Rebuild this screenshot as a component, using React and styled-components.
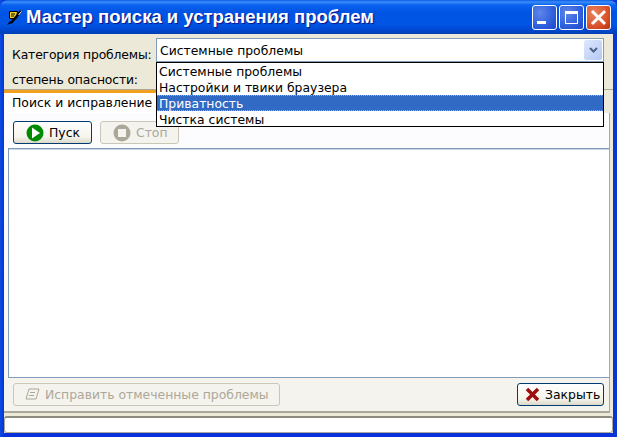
import React from "react";
import styled, { createGlobalStyle } from "styled-components";

const Global = createGlobalStyle`
  html, body { margin: 0; padding: 0; background: #0831d9; }
  * { box-sizing: border-box; }
`;

const Win = styled.div`
  width: 617px;
  height: 437px;
  display: flex;
  flex-direction: column;
  font-family: "DejaVu Sans", Verdana, sans-serif;
  font-size: 12.4px;
  color: #000;
  overflow: hidden;
  background: linear-gradient(90deg, #0a4de0 0, #0831d9 4px, #0831d9 613px, #0a3ad0 100%);
`;

const TitleBar = styled.div`
  height: 34px;
  flex: none;
  display: flex;
  align-items: center;
  padding: 0 6px 0 6px;
  border-radius: 8px 8px 0 0;
  background: linear-gradient(180deg, #0a5de8 0, #3b8cf6 2px, #0a62f0 5px, #0054e3 12px, #0055e5 24px, #0048d0 30px, #0040b8 33px);
`;

const AppIcon = styled.svg`
  width: 16px;
  height: 18px;
  flex: none;
  margin-right: 4px;
`;

const Title = styled.div`
  flex: 1;
  color: #fff;
  font-family: "Liberation Sans", Arial, sans-serif;
  font-size: 18.5px;
  font-weight: bold;
  text-shadow: 1px 1px 1px #0f1089;
  white-space: nowrap;
`;

const CapButton = styled.div`
  width: 25px;
  height: 25px;
  margin-left: 2px;
  border: 1px solid #fff;
  border-radius: 3px;
  display: flex;
  align-items: center;
  justify-content: center;
  background: ${p =>
    p.$close
      ? "radial-gradient(circle at 30% 30%, #e8835f, #d9532c 60%, #b8300e)"
      : "radial-gradient(circle at 30% 30%, #5f85e8, #2f5fdc 60%, #1f45c8)"};
`;

const Body = styled.div`
  flex: 1;
  margin: 0 4px 4px;
  display: flex;
  flex-direction: column;
  background: #ece9d8;
  min-height: 0;
`;

const Filter = styled.div`
  position: relative;
  height: 56px;
  flex: none;
  display: grid;
  grid-template-columns: 152px 448px;
  grid-template-rows: 28px 27px;
  padding-top: 4px;
  border-bottom: 1px solid #aca899;
`;

const FilterLabel = styled.div`
  padding: ${p => p.$top}px 0 0 8px;
  line-height: 15px;
  letter-spacing: -0.16px;
  white-space: nowrap;
`;

const Combo = styled.div`
  height: 24px;
  border: 1px solid #7f9db9;
  background: #fff;
  display: flex;
  align-items: center;
  justify-content: space-between;
  padding: 0 1px 0 3px;
`;

const ComboArrow = styled.div`
  width: 18px;
  height: 20px;
  border-radius: 2px;
  background: linear-gradient(135deg, #dfe8fb, #b3c8f5);
  display: flex;
  align-items: center;
  justify-content: center;
`;

const DropDown = styled.div`
  position: absolute;
  left: 152px;
  top: 28px;
  width: 448px;
  height: 65px;
  z-index: 2;
  background: #fff;
  border: 1px solid #000;
`;

const dots = "repeating-linear-gradient(90deg, #e8a840 0 1px, transparent 1px 2px)";

const DropItem = styled.div`
  height: 16px;
  line-height: 17px;
  padding-left: 2px;
  white-space: nowrap;
  color: ${p => (p.$active ? "#fff" : "#000")};
  background: ${p =>
    p.$active
      ? `${dots} top / 100% 1px no-repeat, ${dots} bottom / 100% 1px no-repeat, #316ac5`
      : "transparent"};
`;

const TabStrip = styled.div`
  height: 23px;
  flex: none;
  display: flex;
`;

const Tab = styled.div`
  width: 152px;
  border-top: 3px solid #f2a01e;
  background: #fff;
  line-height: 16px;
  padding: 2px 0 0 8px;
  white-space: nowrap;
`;

const Page = styled.div`
  flex: 1;
  margin-right: 3px;
  display: flex;
  flex-direction: column;
  min-height: 0;
  background: linear-gradient(180deg, #fff 0, #f6f5f0 100%);
  border-right: 1px solid #aca899;
  border-bottom: 2px solid #aca899;
`;

const Toolbar = styled.div`
  height: 35px;
  flex: none;
  display: flex;
  gap: 8px;
  align-items: flex-start;
  padding: 8px 0 0 9px;
  background: #fcfcfe;
`;

const Btn = styled.div`
  width: ${p => p.$w}px;
  height: 23px;
  display: flex;
  align-items: center;
  gap: 5px;
  padding-left: ${p => p.$pad || 12}px;
  border-radius: 3px;
  white-space: nowrap;
  color: ${p => (p.$off ? "#aca899" : "#000")};
  border: 1px solid ${p => (p.$off ? "#cbc7b8" : "#003c74")};
  background: ${p =>
    p.$off ? "#f4f3ee" : "linear-gradient(180deg, #fff 0, #f5f4ec 70%, #dcd8ca 100%)"};
`;

const List = styled.div`
  flex: 1;
  margin-left: 4px;
  background: #fff;
  border-top: 1px solid #7f9db9;
  border-left: 1px solid #7f9db9;
  border-bottom: 1px solid #7f9db9;
  box-shadow: inset 0 1px 0 #c9d6e6;
`;

const Footer = styled.div`
  height: 33px;
  flex: none;
  display: flex;
  justify-content: space-between;
  align-items: flex-start;
  padding: 5px 5px 0 9px;
  background: #f4f3ee;
`;

const StatusBar = styled.div`
  height: 17px;
  flex: none;
  margin-top: 3px;
  background: #fff;
  border: 1px solid #aca899;
  border-top: 2px solid #8d8a7e;
  border-radius: 3px;
`;

const App = () => (
  <Win>
    <Global />
    <TitleBar>
      <AppIcon viewBox="0 0 16 18">
        <path d="M3.500 3.500h8l-1 7h-7z" fill="#f2d21e" stroke="#000" />
        <path d="M5 6h4M5 8h3" stroke="#000" />
        <path d="M15 3L5 15" stroke="#000" strokeWidth="2.500" />
        <path d="M15.500 3.500l-3 3.500" stroke="#fff" />
        <path d="M1 17l3-4 2 2z" fill="#000" />
      </AppIcon>
      <Title>Мастер поиска и устранения проблем</Title>
      <CapButton>
        <svg width="23" height="23" viewBox="0 0 23 23">
          <rect x="4" y="15" width="9" height="3" fill="#fff" />
        </svg>
      </CapButton>
      <CapButton>
        <svg width="23" height="23" viewBox="0 0 23 23">
          <rect x="5.500" y="5.500" width="12" height="12" fill="none" stroke="#fff" />
          <rect x="5" y="5" width="13" height="3" fill="#fff" />
        </svg>
      </CapButton>
      <CapButton $close>
        <svg width="23" height="23" viewBox="0 0 23 23">
          <path d="M5 5l13 13M18 5L5 18" stroke="#fff" strokeWidth="3" />
        </svg>
      </CapButton>
    </TitleBar>
    <Body>
      <Filter>
        <FilterLabel $top={9}>Категория проблемы:</FilterLabel>
        <Combo>
          Системные проблемы
          <ComboArrow>
            <svg width="9" height="7" viewBox="0 0 9 7">
              <path d="M1 1l3.500 3.500L8 1" fill="none" stroke="#4d6185" strokeWidth="2" />
            </svg>
          </ComboArrow>
        </Combo>
        <FilterLabel $top={6}>степень опасности:</FilterLabel>
        <DropDown>
          <DropItem>Системные проблемы</DropItem>
          <DropItem>Настройки и твики браузера</DropItem>
          <DropItem $active>Приватность</DropItem>
          <DropItem>Чистка системы</DropItem>
        </DropDown>
      </Filter>
      <TabStrip>
        <Tab>Поиск и исправление</Tab>
      </TabStrip>
      <Page>
        <Toolbar>
          <Btn $w={79}>
            <svg width="18" height="18" viewBox="0 0 18 18">
              <circle cx="9" cy="9" r="8.500" fill="#008a00" />
              <path d="M6 3.500L14 9l-8 5.500z" fill="#fff" />
            </svg>
            Пуск
          </Btn>
          <Btn $w={79} $off>
            <svg width="18" height="18" viewBox="0 0 18 18">
              <circle cx="9" cy="9" r="8.500" fill="#aca899" />
              <rect x="5" y="5" width="8" height="8" fill="#f4f3ee" />
            </svg>
            Стоп
          </Btn>
        </Toolbar>
        <List />
        <Footer>
          <Btn $w={267} $pad={11} $off>
            <svg width="15" height="14" viewBox="0 0 15 14">
              <path d="M4 1h10l-3 10H1z" fill="none" stroke="#aca899" />
              <path d="M5 4.500h5M4 7.500h5" stroke="#aca899" />
            </svg>
            Исправить отмеченные проблемы
          </Btn>
          <Btn $w={87} $pad={7}>
            <svg width="15" height="15" viewBox="0 0 15 15">
              <path d="M2 2l11 11M13 2L2 13" stroke="#a00d0d" strokeWidth="3.500" />
            </svg>
            Закрыть
          </Btn>
        </Footer>
      </Page>
      <StatusBar />
    </Body>
  </Win>
);

export default App;
